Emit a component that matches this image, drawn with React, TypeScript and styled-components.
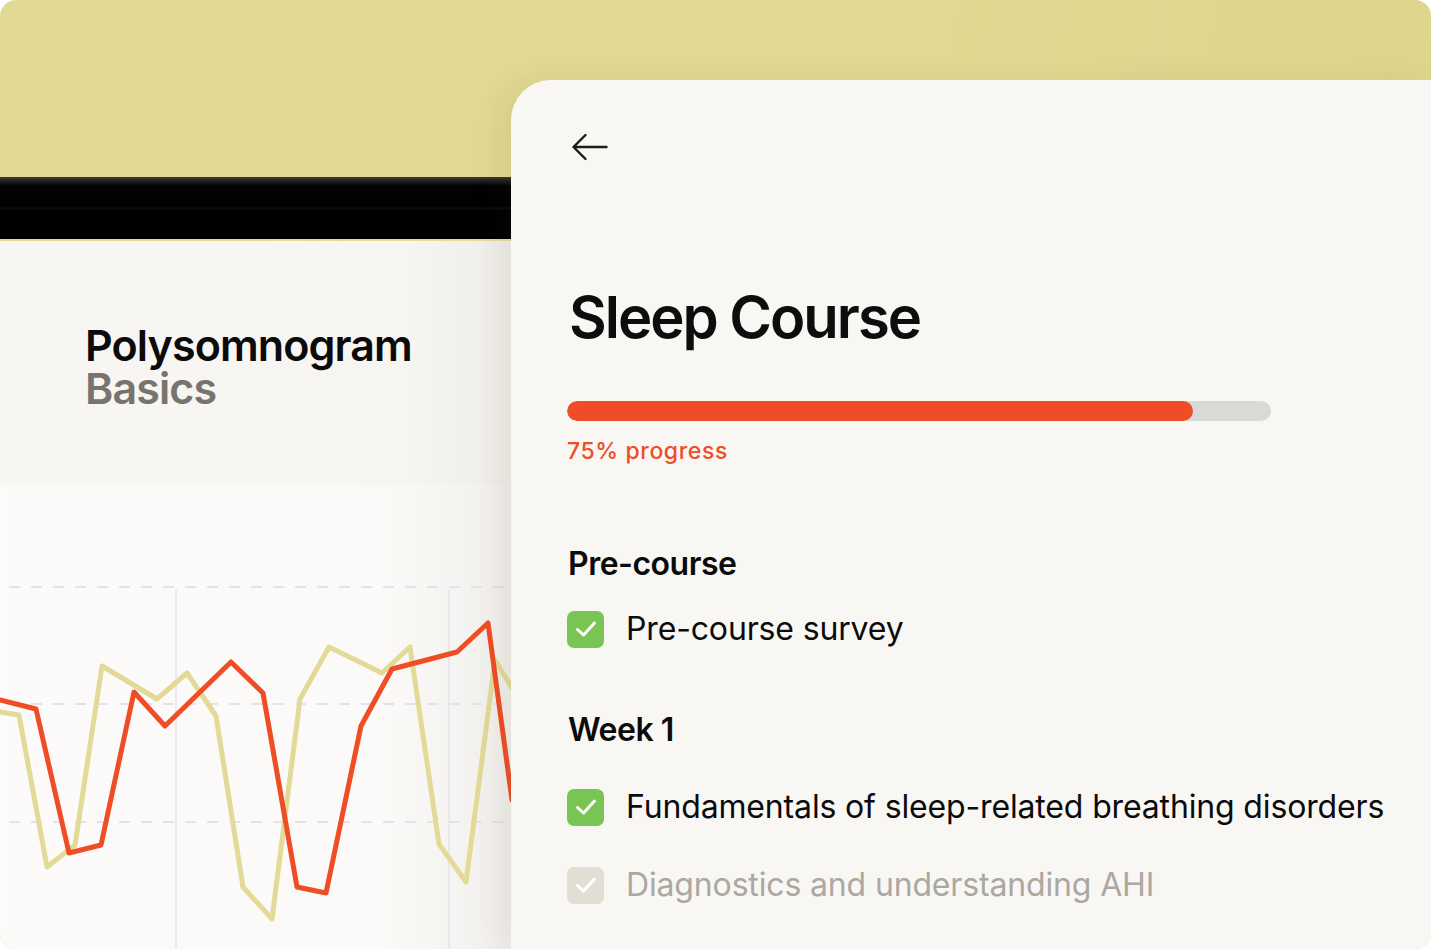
import React from "react";
import styled, { createGlobalStyle } from "styled-components";

const Global = createGlobalStyle`
  html, body { margin: 0; padding: 0; background: #ffffff; }
  body { font-family: Inter, "Noto Sans", sans-serif; -webkit-font-smoothing: antialiased; }
  * { box-sizing: border-box; }
`;

const Frame = styled.div`
  width: 1431px;
  height: 949px;
  border-radius: 16px;
  overflow: hidden;
  display: grid;
  grid-template-columns: 511px 1fr;
  background: linear-gradient(100deg, #e2da94 0%, #e1d991 60%, #ddd48b 100%);
`;

const LeftColumn = styled.div`
  display: flex;
  flex-direction: column;
  min-height: 0;
`;

const YellowSpace = styled.div`
  height: 177px;
  flex: none;
`;

const DeviceBar = styled.div`
  height: 64px;
  flex: none;
  background: linear-gradient(180deg, #3a3a3a 0px, #1a1a1a 5px, #020202 9px, #000 30px, #111 31px, #000 33px, #000 100%);
  border-bottom: 2px solid #e6dc98;
`;

const TitlePanel = styled.div`
  height: 244px;
  flex: none;
  background: linear-gradient(90deg, #f8f6f2 0%, #f7f5f1 80%, #efede8 100%);
  padding: 83px 0 0 85px;
`;

const CourseName = styled.h2`
  margin: 0;
  font-size: 43px;
  line-height: 43px;
  font-weight: 600;
  letter-spacing: -0.9px;
  color: #0b0b0b;
`;

const CourseSub = styled.span`
  display: block;
  color: #77746f;
`;

const ChartArea = styled.div`
  flex: 1;
  background: linear-gradient(90deg, #fcfbf9 0%, #fbfaf8 75%, #f1efec 100%);
  overflow: hidden;
  svg { display: block; }
`;

const RightColumn = styled.div`
  padding-top: 80px;
  display: flex;
  min-height: 0;
`;

const Panel = styled.section`
  flex: 1;
  background: #f9f7f3;
  border-top-left-radius: 40px;
  box-shadow: -14px 0 28px rgba(70, 60, 30, 0.07);
  padding: 53px 0 0 56px;
  display: flex;
  flex-direction: column;
  align-items: flex-start;
`;

const BackButton = styled.button`
  border: 0;
  background: none;
  padding: 0;
  margin-left: 4px;
  width: 37px;
  height: 28px;
  cursor: pointer;
  svg { display: block; }
`;

const Title = styled.h1`
  margin: 127px 0 0 2px;
  font-size: 58px;
  line-height: 58px;
  font-weight: 600;
  letter-spacing: -2px;
  color: #0d0d0d;
`;

const Track = styled.div`
  margin-top: 55px;
  width: 704px;
  height: 20px;
  border-radius: 10px;
  background: #d9d9d8;
  overflow: hidden;
`;

const Fill = styled.div`
  height: 100%;
  border-radius: 10px;
  background: #ef4d26;
`;

const ProgressLabel = styled.div`
  margin-top: 19px;
  font-size: 23px;
  line-height: 23px;
  font-weight: 500;
  letter-spacing: 0.6px;
  color: #ef4d26;
`;

const SectionHeading = styled.h3<{ $gap: number }>`
  margin: ${(p) => p.$gap}px 0 0 1px;
  font-size: 32px;
  line-height: 32px;
  font-weight: 600;
  letter-spacing: -0.5px;
  color: #0b0b0b;
`;

const Item = styled.div<{ $gap: number; $muted?: boolean }>`
  margin-top: ${(p) => p.$gap}px;
  display: flex;
  align-items: center;
  gap: 22px;
  font-size: 32px;
  line-height: 38px;
  font-weight: 400;
  letter-spacing: -0.15px;
  color: ${(p) => (p.$muted ? "#aba8a2" : "#0b0b0b")};
`;

const Check = styled.span<{ $muted?: boolean }>`
  width: 37px;
  height: 37px;
  flex: none;
  border-radius: 7px;
  background: ${(p) => (p.$muted ? "#e3ded4" : "#79c553")};
  display: flex;
  align-items: center;
  justify-content: center;
  svg { display: block; }
`;

const CheckIcon = () => (
  <svg width="22" height="18" viewBox="0 0 22 18" fill="none">
    <path d="M2.5 9.5 L8.5 15 L19.5 3" stroke="#ffffff" strokeWidth="3" strokeLinecap="round" strokeLinejoin="round" />
  </svg>
);

const red = [
  [0, 700], [36, 709], [69, 853], [101, 845], [134, 692], [165, 726], [231, 662], [263, 693],
  [297, 887], [326, 893], [361, 726], [392, 669], [457, 652], [488, 623], [512, 800],
];
const yellow = [
  [0, 712], [19, 715], [47, 867], [75, 845], [102, 666], [157, 699], [187, 673], [216, 716],
  [243, 887], [272, 919], [300, 699], [329, 647], [382, 673], [410, 647], [439, 844], [466, 882],
  [495, 660], [512, 688],
];
const toPts = (a: number[][]) => a.map(([x, y]) => `${x},${y - 485}`).join(" ");

const Chart = () => (
  <svg width="511" height="464" viewBox="0 0 511 464">
    {[102, 219, 337].map((y) => (
      <line key={y} x1="9" x2="508" y1={y} y2={y} stroke="#e2e1ec" strokeWidth="2" strokeDasharray="11 11" />
    ))}
    {[176, 449].map((x) => (
      <line key={x} x1={x} x2={x} y1="104" y2="464" stroke="#e3e3ee" strokeWidth="1.5" />
    ))}
    <polyline points={toPts(yellow)} fill="none" stroke="#e2da96" strokeWidth="5" strokeLinejoin="round" strokeLinecap="round" />
    <polyline points={toPts(red)} fill="none" stroke="#ef4d26" strokeWidth="5" strokeLinejoin="round" strokeLinecap="round" />
  </svg>
);

export default function App() {
  return (
    <>
      <Global />
      <Frame>
        <LeftColumn>
          <YellowSpace />
          <DeviceBar />
          <TitlePanel>
            <CourseName>
              Polysomnogram
              <CourseSub>Basics</CourseSub>
            </CourseName>
          </TitlePanel>
          <ChartArea>
            <Chart />
          </ChartArea>
        </LeftColumn>
        <RightColumn>
          <Panel>
            <BackButton aria-label="Back">
              <svg width="37" height="28" viewBox="0 0 37 28" fill="none">
                <path d="M35.5 14 H2.5 M14.5 2 L2.5 14 L14.5 26" stroke="#1b1b1b" strokeWidth="2.4" strokeLinecap="round" strokeLinejoin="round" />
              </svg>
            </BackButton>
            <Title>Sleep Course</Title>
            <Track>
              <Fill style={{ width: `${(626 / 704) * 100}%` }} />
            </Track>
            <ProgressLabel>75% progress</ProgressLabel>
            <SectionHeading $gap={85}>Pre-course</SectionHeading>
            <Item $gap={30}>
              <Check><CheckIcon /></Check>
              Pre-course survey
            </Item>
            <SectionHeading $gap={66}>Week 1</SectionHeading>
            <Item $gap={42}>
              <Check><CheckIcon /></Check>
              Fundamentals of sleep-related breathing disorders
            </Item>
            <Item $gap={40} $muted>
              <Check $muted><CheckIcon /></Check>
              Diagnostics and understanding AHI
            </Item>
          </Panel>
        </RightColumn>
      </Frame>
    </>
  );
}
